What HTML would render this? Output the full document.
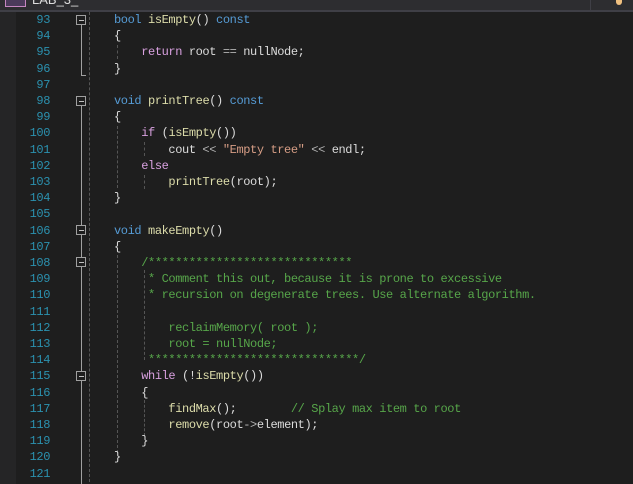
<!DOCTYPE html>
<html style="width:633px;height:484px;overflow:hidden"><head><style>
body{margin:0;width:633px;height:484px;overflow:hidden;background:#1e1e1e;position:relative;font-family:"Liberation Mono",monospace}
.top{position:absolute;left:0;top:0;width:633px;height:10px;background:#2d2d30;border-bottom:2px solid #3f3f46}
.side{position:absolute;left:0;top:12px;width:16px;height:472px;background:#252526}
.ln{position:absolute;left:16px;width:34px;text-align:right;color:#2b91af;font-size:12px;letter-spacing:-0.4px;line-height:16px}
.c{position:absolute;left:114px;white-space:pre;color:#dcdcdc;font-size:12px;letter-spacing:-0.4px;line-height:16px}
.k{color:#569cd6}.p{color:#d8a0df}.f{color:#dcdcaa}.g{color:#57a64a}.s{color:#d69d85}.o{color:#b4b4b4}
.fold{position:absolute;left:76px;width:8px;height:8px;border:1px solid #a0a0a0;background:#1e1e1e}
.fold:after{content:"";position:absolute;left:2px;top:4px;width:5px;height:1px;background:#c0c0c0}
.vl{position:absolute;left:81px;width:1px;background:#a0a0a0}
.dash{position:absolute;width:0;border-left:1px dashed #555}
</style></head><body>
<div class="top"></div>
<div style="position:absolute;left:5px;top:0;width:19px;height:6px;border:1px solid #c586c0;border-top:none;background:#4b3a5a"></div>
<div style="position:absolute;left:32px;top:-8px;color:#ddd;font:13px 'Liberation Sans',sans-serif">LAB_3_</div>
<div style="position:absolute;left:590px;top:0;width:1px;height:10px;background:#3f3f46"></div>
<div style="position:absolute;left:616px;top:0;width:6px;height:5px;background:#f0c080;border-radius:0 0 3px 3px"></div>
<div class="side"></div>
<div class="dash" style="left:89px;top:12px;height:470px"></div>
<div class="vl" style="top:25px;height:50px"></div><div style="position:absolute;left:81px;top:75px;width:5px;height:1px;background:#a0a0a0"></div>
<div class="vl" style="top:106px;height:378px"></div>
<div class="fold" style="top:15px"></div>
<div class="fold" style="top:96px"></div>
<div class="fold" style="top:225px"></div>
<div class="fold" style="top:257px"></div>
<div class="fold" style="top:371px"></div>
<div class="dash" style="left:117px;top:45px;height:14px"></div>
<div class="dash" style="left:117px;top:126px;height:62px"></div>
<div class="dash" style="left:144px;top:142px;height:14px"></div>
<div class="dash" style="left:144px;top:175px;height:14px"></div>
<div class="dash" style="left:117px;top:255px;height:198px"></div>
<div class="dash" style="left:144px;top:270px;height:90px"></div>
<div class="dash" style="left:144px;top:400px;height:36px"></div>
<div id="L"></div>
<script>
const lines=[
'<span class="k">bool</span> <span class="f">isEmpty</span>() <span class="k">const</span>',
'{',
'    <span class="p">return</span> root <span class="o">==</span> nullNode;',
'}',
'',
'<span class="k">void</span> <span class="f">printTree</span>() <span class="k">const</span>',
'{',
'    <span class="p">if</span> (<span class="f">isEmpty</span>())',
'        cout <span class="o">&lt;&lt;</span> <span class="s">"Empty tree"</span> <span class="o">&lt;&lt;</span> endl;',
'    <span class="p">else</span>',
'        <span class="f">printTree</span>(root);',
'}',
'',
'<span class="k">void</span> <span class="f">makeEmpty</span>()',
'{',
'    <span class="g">/******************************</span>',
'<span class="g">     * Comment this out, because it is prone to excessive</span>',
'<span class="g">     * recursion on degenerate trees. Use alternate algorithm.</span>',
'',
'<span class="g">        reclaimMemory( root );</span>',
'<span class="g">        root = nullNode;</span>',
'<span class="g">     *******************************/</span>',
'    <span class="p">while</span> (!<span class="f">isEmpty</span>())',
'    {',
'        <span class="f">findMax</span>();        <span class="g">// Splay max item to root</span>',
'        <span class="f">remove</span>(root<span class="o">-&gt;</span>element);',
'    }',
'}',
''];
let h='';
for(let i=0;i<29;i++){const y=12+i*16.2;
h+=`<div class="ln" style="top:${y}px">${93+i}</div><div class="c" style="top:${y}px">${lines[i]}</div>`;}
document.getElementById('L').innerHTML=h;
</script>
</body></html>
